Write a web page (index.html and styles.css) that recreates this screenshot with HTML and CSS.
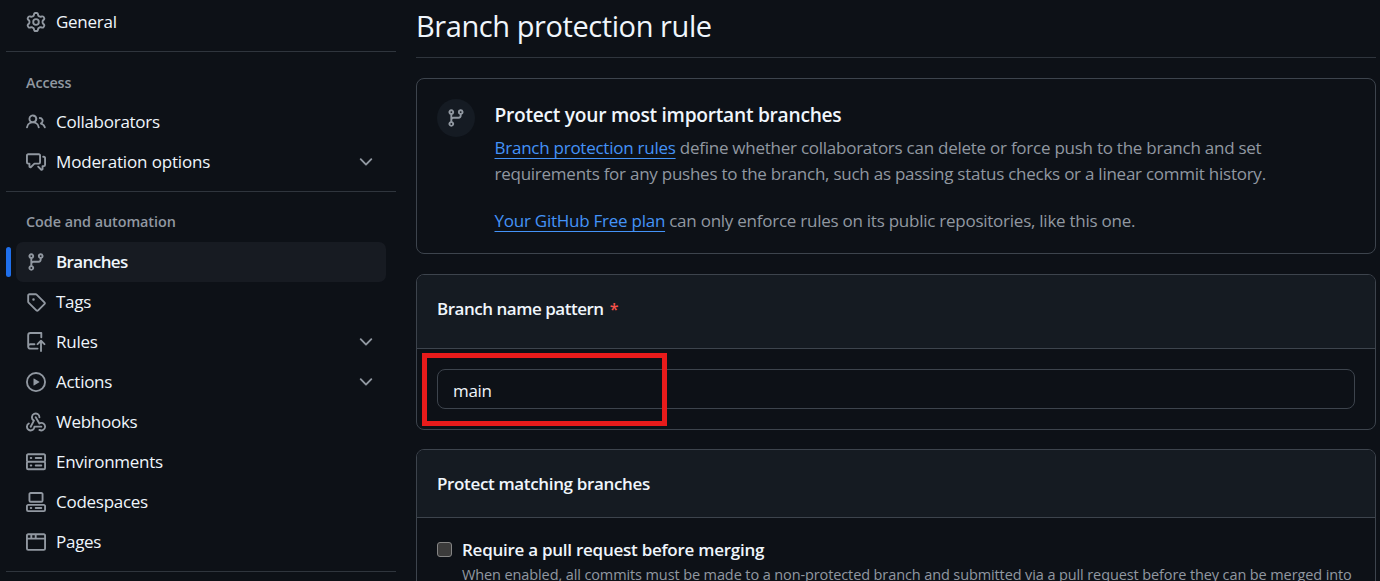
FILE: index.html
```html
<!DOCTYPE html>
<html lang="en">
<head>
<meta charset="utf-8">
<title>Branch protection rule</title>
<link rel="stylesheet" href="styles.css">
</head>
<body>
<div class="layout">
  <nav class="sidebar">
    <a class="item"><svg class="icon" viewBox="0 0 16 16"><path d="M8 0a8.2 8.2 0 0 1 .701.031C9.444.095 9.99.645 10.16 1.29l.288 1.107c.018.066.079.158.212.224.231.114.454.243.668.386.123.082.233.09.299.071l1.103-.303c.644-.176 1.392.021 1.82.63.27.385.506.792.704 1.218.315.675.111 1.422-.364 1.891l-.814.806c-.049.048-.098.147-.088.294.016.257.016.515 0 .772-.01.147.038.246.088.294l.814.806c.475.469.679 1.216.364 1.891a7.977 7.977 0 0 1-.704 1.217c-.428.61-1.176.807-1.82.63l-1.102-.302c-.067-.019-.177-.011-.3.071a5.909 5.909 0 0 1-.668.386c-.133.066-.194.158-.211.224l-.29 1.106c-.168.646-.715 1.196-1.458 1.26a8.006 8.006 0 0 1-1.402 0c-.743-.064-1.289-.614-1.458-1.26l-.289-1.106c-.018-.066-.079-.158-.212-.224a5.738 5.738 0 0 1-.668-.386c-.123-.082-.233-.09-.299-.071l-1.103.303c-.644.176-1.392-.021-1.82-.63a8.12 8.12 0 0 1-.704-1.218c-.315-.675-.111-1.422.363-1.891l.815-.806c.05-.048.098-.147.088-.294a6.214 6.214 0 0 1 0-.772c.01-.147-.038-.246-.088-.294l-.815-.806C.635 6.045.431 5.298.746 4.623a7.92 7.92 0 0 1 .704-1.217c.428-.61 1.176-.807 1.82-.63l1.102.302c.067.019.177.011.3-.071.214-.143.437-.272.668-.386.133-.066.194-.158.211-.224l.29-1.106C6.009.645 6.556.095 7.299.03 7.53.01 7.764 0 8 0Zm-.571 1.525c-.036.003-.108.036-.137.146l-.289 1.105c-.147.561-.549.967-.998 1.189-.173.086-.34.183-.5.29-.417.278-.97.423-1.529.27l-1.103-.303c-.109-.03-.175.016-.195.045-.22.312-.412.644-.573.99-.014.031-.021.11.059.19l.815.806c.411.406.562.957.53 1.456a4.709 4.709 0 0 0 0 .582c.032.499-.119 1.05-.53 1.456l-.815.806c-.081.08-.073.159-.059.19.162.346.353.677.573.989.02.03.085.076.195.046l1.102-.303c.56-.153 1.113-.008 1.53.27.161.107.328.204.501.29.447.222.85.629.997 1.189l.289 1.105c.029.109.101.143.137.146a6.6 6.6 0 0 0 1.142 0c.036-.003.108-.036.137-.146l.289-1.105c.147-.561.549-.967.998-1.189.173-.086.34-.183.5-.29.417-.278.97-.423 1.529-.27l1.103.303c.109.029.175-.016.195-.045.22-.313.411-.644.573-.99.014-.031.021-.11-.059-.19l-.815-.806c-.411-.406-.562-.957-.53-1.456a4.709 4.709 0 0 0 0-.582c-.032-.499.119-1.05.53-1.456l.815-.806c.081-.08.073-.159.059-.19a6.464 6.464 0 0 0-.573-.989c-.02-.03-.085-.076-.195-.046l-1.102.303c-.56.153-1.113.008-1.53-.27a4.44 4.44 0 0 0-.501-.29c-.447-.222-.85-.629-.997-1.189l-.289-1.105c-.029-.11-.101-.143-.137-.146a6.6 6.6 0 0 0-1.142 0ZM11 8a3 3 0 1 1-6 0 3 3 0 0 1 6 0ZM9.5 8a1.5 1.5 0 1 0-3.001.001A1.5 1.5 0 0 0 9.5 8Z"/></svg><span class="label">General</span></a>
    <hr class="divider">
    <h3 class="group">Access</h3>
    <a class="item"><svg class="icon" viewBox="0 0 16 16"><path d="M2 5.5a3.5 3.5 0 1 1 5.898 2.549 5.508 5.508 0 0 1 3.034 4.084.75.75 0 1 1-1.482.235 4 4 0 0 0-7.9 0 .75.75 0 0 1-1.482-.236A5.507 5.507 0 0 1 3.102 8.05 3.493 3.493 0 0 1 2 5.5ZM11 4a3.001 3.001 0 0 1 2.22 5.018 5.01 5.01 0 0 1 2.56 3.012.749.749 0 0 1-.885.954.752.752 0 0 1-.549-.514 3.507 3.507 0 0 0-2.522-2.372.75.75 0 0 1-.574-.73v-.352a.75.75 0 0 1 .416-.672A1.5 1.5 0 0 0 11 5.5.75.75 0 0 1 11 4Zm-5.5-.5a2 2 0 1 0-.001 3.999A2 2 0 0 0 5.5 3.5Z"/></svg><span class="label">Collaborators</span></a>
    <a class="item"><svg class="icon" viewBox="0 0 16 16"><path d="M1.75 1h8.5c.966 0 1.75.784 1.75 1.75v5.5A1.75 1.75 0 0 1 10.25 10H7.061l-2.574 2.573A1.458 1.458 0 0 1 2 11.543V10h-.25A1.75 1.75 0 0 1 0 8.25v-5.5C0 1.784.784 1 1.75 1ZM1.5 2.75v5.5c0 .138.112.25.25.25h1a.75.75 0 0 1 .75.75v2.19l2.72-2.72a.749.749 0 0 1 .53-.22h3.5a.25.25 0 0 0 .25-.25v-5.5a.25.25 0 0 0-.25-.25h-8.5a.25.25 0 0 0-.25.25Zm13 2a.25.25 0 0 0-.25-.25h-.5a.75.75 0 0 1 0-1.5h.5c.966 0 1.75.784 1.75 1.75v5.5A1.75 1.75 0 0 1 14.25 12H14v1.543a1.458 1.458 0 0 1-2.487 1.03L9.22 12.28a.749.749 0 0 1 .326-1.275.749.749 0 0 1 .734.215l2.22 2.22v-2.19a.75.75 0 0 1 .75-.75h1a.25.25 0 0 0 .25-.25Z"/></svg><span class="label wide">Moderation options</span><svg class="icon" viewBox="0 0 16 16"><path d="M12.78 5.22a.749.749 0 0 1 0 1.06l-4.25 4.25a.749.749 0 0 1-1.06 0L3.22 6.28a.749.749 0 1 1 1.06-1.06L8 8.939l3.72-3.719a.749.749 0 0 1 1.06 0Z"/></svg></a>
    <hr class="divider">
    <h3 class="group group-code">Code and automation</h3>
    <a class="item selected"><svg class="icon" viewBox="0 0 16 16"><path d="M9.5 3.25a2.25 2.25 0 1 1 3 2.122V6A2.5 2.5 0 0 1 10 8.5H6a1 1 0 0 0-1 1v1.128a2.251 2.251 0 1 1-1.5 0V5.372a2.25 2.25 0 1 1 1.5 0v1.836A2.493 2.493 0 0 1 6 7h4a1 1 0 0 0 1-1v-.628A2.25 2.25 0 0 1 9.5 3.25Zm-6 0a.75.75 0 1 0 1.5 0 .75.75 0 0 0-1.5 0Zm8.25-.75a.75.75 0 1 0 0 1.5.75.75 0 0 0 0-1.5ZM4.25 12a.75.75 0 1 0 0 1.5.75.75 0 0 0 0-1.5Z"/></svg><span class="label">Branches</span></a>
    <a class="item"><svg class="icon" viewBox="0 0 16 16"><path d="M1 7.775V2.75C1 1.784 1.784 1 2.75 1h5.025c.464 0 .91.184 1.238.513l6.25 6.25a1.75 1.75 0 0 1 0 2.474l-5.026 5.026a1.75 1.75 0 0 1-2.474 0l-6.25-6.25A1.752 1.752 0 0 1 1 7.775Zm1.5 0c0 .066.026.13.073.177l6.25 6.25a.25.25 0 0 0 .354 0l5.025-5.025a.25.25 0 0 0 0-.354l-6.25-6.25a.25.25 0 0 0-.177-.073H2.75a.25.25 0 0 0-.25.25ZM6 5a1 1 0 1 1 0 2 1 1 0 0 1 0-2Z"/></svg><span class="label">Tags</span></a>
    <a class="item"><svg class="icon" viewBox="0 0 16 16"><path d="M1 2.5A2.5 2.5 0 0 1 3.5 0h8.75a.75.75 0 0 1 .75.75v3.5a.75.75 0 0 1-1.5 0V1.5h-8a1 1 0 0 0-1 1v6.708A2.493 2.493 0 0 1 3.5 9h3.25a.75.75 0 0 1 0 1.5H3.5a1 1 0 0 0 0 2h5.75a.75.75 0 0 1 0 1.5H3.5A2.5 2.5 0 0 1 1 11.5Zm13.23 7.79-1.48-1.48v6.44a.75.75 0 0 1-1.5 0V8.81l-1.47 1.47a.749.749 0 0 1-1.275-.326.749.749 0 0 1 .215-.734l2.75-2.75a.75.75 0 0 1 1.06 0l2.75 2.75a.749.749 0 0 1-.326 1.275.749.749 0 0 1-.724-.205Z"/></svg><span class="label">Rules</span><svg class="icon" viewBox="0 0 16 16"><path d="M12.78 5.22a.749.749 0 0 1 0 1.06l-4.25 4.25a.749.749 0 0 1-1.06 0L3.22 6.28a.749.749 0 1 1 1.06-1.06L8 8.939l3.72-3.719a.749.749 0 0 1 1.06 0Z"/></svg></a>
    <a class="item"><svg class="icon" viewBox="0 0 16 16"><path d="M8 0a8 8 0 1 1 0 16A8 8 0 0 1 8 0ZM1.5 8a6.5 6.5 0 1 0 13 0 6.5 6.5 0 0 0-13 0Zm4.879-2.773 4.264 2.559a.25.25 0 0 1 0 .428l-4.264 2.559A.25.25 0 0 1 6 10.559V5.442a.25.25 0 0 1 .379-.215Z"/></svg><span class="label">Actions</span><svg class="icon" viewBox="0 0 16 16"><path d="M12.78 5.22a.749.749 0 0 1 0 1.06l-4.25 4.25a.749.749 0 0 1-1.06 0L3.22 6.28a.749.749 0 1 1 1.06-1.06L8 8.939l3.72-3.719a.749.749 0 0 1 1.06 0Z"/></svg></a>
    <a class="item"><svg class="icon" viewBox="0 0 16 16"><path d="M5.5 4.25a2.25 2.25 0 0 1 4.5 0 .75.75 0 0 0 1.5 0 3.75 3.75 0 1 0-6.14 2.889l-2.272 4.258a.75.75 0 0 0 1.324.706L7 7.25a.75.75 0 0 0-.309-1.015A2.25 2.25 0 0 1 5.5 4.25Z"/><path d="M7.364 3.607a.75.75 0 0 1 1.03.257l2.608 4.349a3.75 3.75 0 1 1-.628 6.785.75.75 0 0 1 .752-1.299 2.25 2.25 0 1 0-.033-3.88.75.75 0 0 1-1.03-.256L7.107 4.636a.75.75 0 0 1 .257-1.03Z"/><path d="M2.9 8.776A.75.75 0 0 1 2.625 9.8 2.25 2.25 0 1 0 6 11.75a.75.75 0 0 1 .75-.751h5.5a.75.75 0 0 1 0 1.5H7.425a3.751 3.751 0 1 1-5.55-3.998.75.75 0 0 1 1.024.274Z"/></svg><span class="label">Webhooks</span></a>
    <a class="item"><svg class="icon" viewBox="0 0 16 16"><path d="M1.75 1h12.5c.966 0 1.75.784 1.75 1.75v4c0 .372-.116.717-.314 1 .198.283.314.628.314 1v4a1.75 1.75 0 0 1-1.75 1.75H1.75A1.75 1.75 0 0 1 0 12.75v-4c0-.358.109-.707.314-1a1.739 1.739 0 0 1-.314-1v-4C0 1.784.784 1 1.75 1ZM1.5 2.75v4c0 .138.112.25.25.25h12.5a.25.25 0 0 0 .25-.25v-4a.25.25 0 0 0-.25-.25H1.75a.25.25 0 0 0-.25.25Zm.25 5.75a.25.25 0 0 0-.25.25v4c0 .138.112.25.25.25h12.5a.25.25 0 0 0 .25-.25v-4a.25.25 0 0 0-.25-.25ZM7 4.75A.75.75 0 0 1 7.75 4h4.5a.75.75 0 0 1 0 1.5h-4.5A.75.75 0 0 1 7 4.75ZM7.75 10h4.5a.75.75 0 0 1 0 1.5h-4.5a.75.75 0 0 1 0-1.5ZM3 4.75A.75.75 0 0 1 3.75 4h.5a.75.75 0 0 1 0 1.5h-.5A.75.75 0 0 1 3 4.75ZM3.75 10h.5a.75.75 0 0 1 0 1.5h-.5a.75.75 0 0 1 0-1.5Z"/></svg><span class="label">Environments</span></a>
    <a class="item"><svg class="icon" viewBox="0 0 16 16"><path d="M0 11.25c0-.966.784-1.75 1.75-1.75h12.5c.966 0 1.75.784 1.75 1.75v3A1.75 1.75 0 0 1 14.25 16H1.75A1.75 1.75 0 0 1 0 14.25Zm2-9.5C2 .784 2.784 0 3.75 0h8.5C13.216 0 14 .784 14 1.75v5a1.75 1.75 0 0 1-1.75 1.75h-8.5A1.75 1.75 0 0 1 2 6.75Zm1.75-.25a.25.25 0 0 0-.25.25v5c0 .138.112.25.25.25h8.5a.25.25 0 0 0 .25-.25v-5a.25.25 0 0 0-.25-.25Zm-2 9.5a.25.25 0 0 0-.25.25v3c0 .138.112.25.25.25h12.5a.25.25 0 0 0 .25-.25v-3a.25.25 0 0 0-.25-.25Z"/><path d="M7 12.75a.75.75 0 0 1 .75-.75h4.5a.75.75 0 0 1 0 1.5h-4.5a.75.75 0 0 1-.75-.75Zm-4 0a.75.75 0 0 1 .75-.75h.5a.75.75 0 0 1 0 1.5h-.5a.75.75 0 0 1-.75-.75Z"/></svg><span class="label">Codespaces</span></a>
    <a class="item"><svg class="icon" viewBox="0 0 16 16"><path d="M0 2.75C0 1.784.784 1 1.75 1h12.5c.966 0 1.75.784 1.75 1.75v10.5A1.75 1.75 0 0 1 14.25 15H1.75A1.75 1.75 0 0 1 0 13.25ZM14.5 6h-13v7.25c0 .138.112.25.25.25h12.5a.25.25 0 0 0 .25-.25Zm-6-3.5v2h6V2.75a.25.25 0 0 0-.25-.25ZM5 2.5v2h2v-2Zm-3.25 0a.25.25 0 0 0-.25.25V4.5h2v-2Z"/></svg><span class="label">Pages</span></a>
    <hr class="divider">
  </nav>
  <main class="main">
    <h1 class="title">Branch protection rule</h1>
    <section class="box intro">
      <div class="badge"><svg class="icon" viewBox="0 0 16 16"><path d="M9.5 3.25a2.25 2.25 0 1 1 3 2.122V6A2.5 2.5 0 0 1 10 8.5H6a1 1 0 0 0-1 1v1.128a2.251 2.251 0 1 1-1.5 0V5.372a2.25 2.25 0 1 1 1.5 0v1.836A2.493 2.493 0 0 1 6 7h4a1 1 0 0 0 1-1v-.628A2.25 2.25 0 0 1 9.5 3.25Zm-6 0a.75.75 0 1 0 1.5 0 .75.75 0 0 0-1.5 0Zm8.25-.75a.75.75 0 1 0 0 1.5.75.75 0 0 0 0-1.5ZM4.25 12a.75.75 0 1 0 0 1.5.75.75 0 0 0 0-1.5Z"/></svg></div>
      <div class="copy">
        <h2 class="intro-title">Protect your most important branches</h2>
        <p class="para"><a class="link">Branch protection rules</a> define whether collaborators can delete or force push to the branch and set<br>requirements for any pushes to the branch, such as passing status checks or a linear commit history.</p>
        <p class="para"><a class="link">Your GitHub Free plan</a> can only enforce rules on its public repositories, like this one.</p>
      </div>
    </section>
    <section class="box pattern">
      <header class="box-header tall"><label class="heading-name">Branch name pattern</label><span class="star">*</span></header>
      <div class="box-body">
        <input class="field" type="text" value="main">
        <div class="highlight"></div>
      </div>
    </section>
    <section class="box last">
      <header class="box-header"><h2 class="heading-match">Protect matching branches</h2></header>
      <div class="option">
        <span class="check"></span>
        <div class="option-text">
          <div class="option-title">Require a pull request before merging</div>
          <div class="option-note">When enabled, all commits must be made to a non-protected branch and submitted via a pull request before they can be merged into</div>
        </div>
      </div>
    </section>
  </main>
</div>
</body>
</html>
```
FILE: styles.css
```css
* { box-sizing: border-box; }
body {
  margin: 0;
  height: 581px;
  overflow: hidden;
  background: #0d1117;
  color: #f0f6fc;
  font-family: "Open Sans", "Noto Sans", sans-serif;
  font-size: 17px;
}
h1, h2, h3, p { margin: 0; }
.layout {
  display: grid;
  grid-template-columns: 390px 960px;
  gap: 20px;
  height: 581px;
  overflow: hidden;
  padding-left: 6px;
}
.sidebar { padding-top: 2px; }
.item {
  position: relative;
  display: flex;
  align-items: center;
  gap: 10px;
  height: 40px;
  margin: 0 10px;
  padding: 0 10px;
  border-radius: 7px;
  white-space: nowrap;
  letter-spacing: -0.27px;
}
.label { flex: 1; padding-bottom: 2px; }
.wide { letter-spacing: -0.15px; }
.selected { background: #171b22; font-weight: 600; letter-spacing: -0.6px; }
.selected::before {
  content: "";
  position: absolute;
  left: -10px;
  top: 5px;
  width: 5px;
  height: 30px;
  border-radius: 3px;
  background: #1f6feb;
}
.icon { display: block; width: 20px; height: 20px; flex: none; fill: #9198a1; }
.divider { margin: 9px 0 0; border: 0; height: 1px; background: #2f353d; }
.group {
  height: 50px;
  padding: 10px 20px 0;
  color: #9198a1;
  font-size: 14.4px;
  font-weight: 600;
  line-height: 41px;
  letter-spacing: -0.13px;
}
.group-code { line-height: 39px; letter-spacing: -0.05px; }
.main { min-width: 0; }
.title {
  height: 58px;
  margin-bottom: 20px;
  border-bottom: 1px solid #2f353d;
  font-size: 29px;
  font-weight: 400;
  line-height: 51px;
  letter-spacing: -0.42px;
}
.box {
  margin-bottom: 20px;
  border: 1px solid #3d444d;
  border-radius: 8px;
  white-space: nowrap;
}
.pattern { margin-bottom: 19px; }
.intro { display: flex; gap: 19.5px; height: 176px; padding: 20px; }
.badge {
  display: grid;
  place-items: center;
  width: 38px;
  height: 38px;
  border-radius: 50%;
  background: #151b23;
}
.intro-title {
  margin-bottom: 4px;
  font-size: 19.2px;
  font-weight: 600;
  line-height: 32px;
  letter-spacing: -0.27px;
}
.para { margin-bottom: 21px; color: #9198a1; line-height: 26px; letter-spacing: -0.25px; }
.link {
  color: #4493f8;
  text-decoration: underline;
  text-decoration-thickness: 1px;
  text-underline-offset: 4px;
}
.box-header {
  display: flex;
  align-items: center;
  height: 68px;
  padding: 0 20px;
  border-bottom: 1px solid #3d444d;
  border-radius: 7px 7px 0 0;
  background: #151b22;
  font-weight: 600;
}
.tall { height: 74px; padding-bottom: 6px; }
.heading-name { letter-spacing: -0.48px; }
.star { margin-left: 6px; color: #f85149; font-size: 16px; }
.heading-match { font-size: 17px; font-weight: 600; letter-spacing: -0.35px; }
.box-body { position: relative; padding: 20px; }
.field {
  display: block;
  width: 918px;
  height: 40px;
  padding: 2px 15px 0;
  border: 1px solid #3d444d;
  border-radius: 8px;
  background: #0d1117;
  color: #f0f6fc;
  font: inherit;
  letter-spacing: -0.3px;
  outline: none;
}
.highlight {
  position: absolute;
  left: 5px;
  top: 4px;
  width: 245px;
  height: 73px;
  border: 5px solid #e81b1b;
}
.last { height: 170px; }
.option { display: flex; gap: 10px; padding: 20px; }
.check {
  width: 15px;
  height: 15px;
  margin-top: 4px;
  border: 1px solid #858585;
  border-radius: 3px;
  background: #3b3b3b;
}
.option-title { font-weight: 600; line-height: 24px; letter-spacing: -0.26px; }
.option-note { color: #9198a1; font-size: 14.5px; line-height: 26px; letter-spacing: -0.11px; }
```
